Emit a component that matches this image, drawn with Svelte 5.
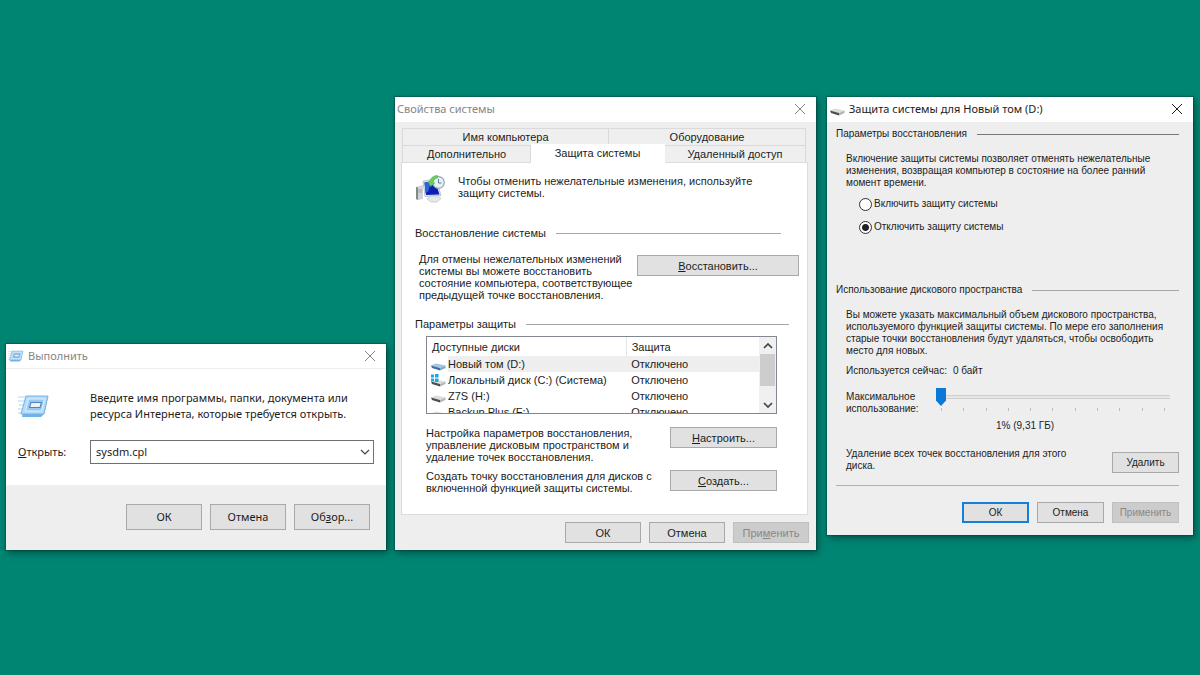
<script>
  const disks = [
    { name: 'Новый том (D:)', state: 'Отключено', kind: 'blue', selected: true },
    { name: 'Локальный диск (C:) (Система)', state: 'Отключено', kind: 'system' },
    { name: 'Z7S (H:)', state: 'Отключено', kind: 'gray' },
    { name: 'Backup Plus  (F:)', state: 'Отключено', kind: 'gray' },
  ];
  let command = $state('sysdm.cpl');
  let protection = $state('off');
  let usage = $state(0);
  const ticks = Array.from({ length: 11 }, (_, i) => i);
</script>

{#snippet closeIcon()}
  <svg class="cross" viewBox="0 0 12 12" aria-hidden="true"><path d="M1 1 11 11M11 1 1 11" fill="none" stroke="currentColor" /></svg>
{/snippet}

{#snippet runIcon()}
  <svg viewBox="0 0 32 24" aria-hidden="true">
    <path d="M0 3h10M0 7h8M1 11h6M0 15h6M0 19h4" stroke="#9fcdf2" stroke-width="1" opacity=".8" />
    <path d="M8 2h22l-4 18-3 3H4z" fill="#6fb2e6" />
    <path d="M8 2h22l-4 18H3z" fill="#b5dbf8" stroke="#74b2e4" />
    <path d="M10.500 5h16l-3 12H7.500z" fill="#93c9f3" stroke="#e0f1ff" />
    <path d="M13 8.500h10.500l-1.500 5H11.500z" fill="#eef3fa" stroke="#5580bd" stroke-width="1.100" />
  </svg>
{/snippet}

{#snippet driveIcon(kind)}
  <svg class="drive" viewBox="0 0 15 13" aria-hidden="true">
    <path d="M0 7.500 5 5.500l9.500 2-5.500 2.500z" fill={kind === 'blue' ? '#a4c6e3' : '#dcdddd'} />
    <path d="M0 7.500 9 10v2.500L1 10z" fill={kind === 'blue' ? '#3f6f9e' : '#4c4e50'} />
    <path d="M9 10 14.500 7.500V10L9 12.500z" fill={kind === 'blue' ? '#7ba8cf' : '#b4b6b7'} />
    {#if kind === 'system'}
      <path d="M0 .5h3v3H0zM4 0h3.500v3.500H4zM0 4.500h3v3H0zM4 4.500h3.500V8H4z" fill="#16a9ea" />
    {/if}
  </svg>
{/snippet}

<main class="desktop">
  <section class="window run" aria-labelledby="run-title">
    <header class="titlebar">
      <span class="mini">{@render runIcon()}</span>
      <h1 id="run-title">Выполнить</h1>
      <button class="close" aria-label="Закрыть">{@render closeIcon()}</button>
    </header>
    <div class="run-body">
      <span class="big">{@render runIcon()}</span>
      <p>Введите имя программы, папки, документа или<br />ресурса Интернета, которые требуется открыть.</p>
      <label for="command"><u>О</u>ткрыть:</label>
      <div class="combo">
        <input id="command" type="text" bind:value={command} />
        <button aria-label="Показать список">
          <svg viewBox="0 0 10 6" aria-hidden="true"><path d="M1 1l4 4 4-4" fill="none" stroke="#444" stroke-width="1.200" /></svg>
        </button>
      </div>
    </div>
    <footer>
      <button class="btn">ОК</button>
      <button class="btn">Отмена</button>
      <button class="btn">Об<u>з</u>ор...</button>
    </footer>
  </section>

  <section class="window system" aria-labelledby="system-title">
    <header class="titlebar">
      <h1 id="system-title">Свойства системы</h1>
      <button class="close" aria-label="Закрыть">{@render closeIcon()}</button>
    </header>
    <div class="system-body">
      <div class="tabs" role="tablist">
        <div class="tab-row upper">
          <button role="tab" aria-selected="false">Имя компьютера</button>
          <button role="tab" aria-selected="false">Оборудование</button>
        </div>
        <div class="tab-row lower">
          <button role="tab" aria-selected="false">Дополнительно</button>
          <button role="tab" aria-selected="true" class="active">Защита системы</button>
          <button role="tab" aria-selected="false">Удаленный доступ</button>
        </div>
      </div>
      <div class="panel" role="tabpanel">
        <div class="intro">
          <svg viewBox="0 0 30 28" aria-hidden="true">
            <path d="M1 12l7-2v14l-5 1-2-1z" fill="#cfd2d6" />
            <path d="M1 12l2 .5V25l-2-1z" fill="#84888d" />
            <path d="M3 15h4M3 17h4" stroke="#8e9399" stroke-width=".7" />
            <path d="M8 6 21 4l5 16.500-16 1z" fill="#e4e7ec" stroke="#a9b0ba" stroke-width=".7" />
            <path d="M9.500 7.500 20 6l4.500 13.500-13.500.5z" fill="#0a1fb4" />
            <path d="M9.500 7.500 16 6.500 13.500 16l-3 2z" fill="#2d62e0" />
            <path d="M12 24l4-3h6l4 2.500-4 3.500h-6z" fill="#e6e8ea" stroke="#b4b8bd" stroke-width=".6" />
            <circle cx="23.500" cy="7.500" r="5.800" fill="#e6f1f5" stroke="#93a8b2" stroke-width="1.200" />
            <path d="M23.500 4v4h3" fill="none" stroke="#53738a" stroke-width=".9" />
            <path d="M22.500.5C18 .5 15.500 3 14.500 7l-1.500-.5 2.500 5 4.500-3.500-2-.5C18.500 5 20 3.500 22.500 3z" fill="#6dcc5a" stroke="#46a84a" stroke-width=".4" />
          </svg>
          <p>Чтобы отменить нежелательные изменения, используйте<br />защиту системы.</p>
        </div>

        <h2 class="rule restore-title">Восстановление системы</h2>
        <div class="action restore">
          <p>Для отмены нежелательных изменений<br />системы вы можете восстановить<br />состояние компьютера, соответствующее<br />предыдущей точке восстановления.</p>
          <button class="btn"><u>В</u>осстановить...</button>
        </div>

        <h2 class="rule params-title">Параметры защиты</h2>
        <div class="settings">
          <div class="list">
            <div class="list-view">
              <table>
                <thead><tr><th>Доступные диски</th><th>Защита</th></tr></thead>
                <tbody>
                  {#each disks as disk}
                    <tr class:selected={disk.selected}>
                      <td><span class="disk">{@render driveIcon(disk.kind)}<span class="name">{disk.name}</span></span></td>
                      <td class="state">{disk.state}</td>
                    </tr>
                  {/each}
                </tbody>
              </table>
            </div>
            <div class="scroll">
              <button aria-label="Вверх"><svg viewBox="0 0 10 6" aria-hidden="true"><path d="M1 5l4-4 4 4" fill="none" stroke="#444" stroke-width="1.700" /></svg></button>
              <div class="thumb"></div>
              <button aria-label="Вниз"><svg viewBox="0 0 10 6" aria-hidden="true"><path d="M1 1l4 4 4-4" fill="none" stroke="#444" stroke-width="1.700" /></svg></button>
            </div>
          </div>
          <div class="action">
            <p>Настройка параметров восстановления,<br />управление дисковым пространством и<br />удаление точек восстановления.</p>
            <button class="btn"><u>Н</u>астроить...</button>
          </div>
          <div class="action">
            <p>Создать точку восстановления для дисков с<br />включенной функцией защиты системы.</p>
            <button class="btn"><u>С</u>оздать...</button>
          </div>
        </div>
      </div>
    </div>
    <footer>
      <button class="btn">ОК</button>
      <button class="btn">Отмена</button>
      <button class="btn" disabled>При<u>м</u>енить</button>
    </footer>
  </section>

  <section class="window volume" aria-labelledby="volume-title">
    <header class="titlebar">
      {@render driveIcon('gray')}
      <h1 id="volume-title">Защита системы для Новый том (D:)</h1>
      <button class="close" aria-label="Закрыть">{@render closeIcon()}</button>
    </header>
    <div class="volume-body">
      <h2 class="rule dark">Параметры восстановления</h2>
      <div class="block">
        <p>Включение защиты системы позволяет отменять нежелательные<br />изменения, возвращая компьютер в состояние на более ранний<br />момент времени.</p>
        <div class="radios">
          <label><input type="radio" name="protection" value="on" bind:group={protection} />Включить защиту системы</label>
          <label><input type="radio" name="protection" value="off" bind:group={protection} />Отключить защиту системы</label>
        </div>
      </div>
      <h2 class="rule">Использование дискового пространства</h2>
      <div class="block">
        <p>Вы можете указать максимальный объем дискового пространства,<br />используемого функцией защиты системы. По мере его заполнения<br />старые точки восстановления будут удаляться, чтобы освободить<br />место для новых.</p>
        <p class="used"><span>Используется сейчас:</span><span>0 байт</span></p>
        <div class="usage">
          <label for="usage">Максимальное<br />использование:</label>
          <div class="slider">
            <input id="usage" type="range" min="0" max="100" bind:value={usage} />
            <div class="ticks">{#each ticks as tick (tick)}<i></i>{/each}</div>
            <output for="usage">1% (9,31 ГБ)</output>
          </div>
        </div>
        <div class="action delete">
          <p>Удаление всех точек восстановления для этого<br />диска.</p>
          <button class="btn">Удалить</button>
        </div>
      </div>
      <footer>
        <button class="btn default">ОК</button>
        <button class="btn">Отмена</button>
        <button class="btn" disabled>Применить</button>
      </footer>
    </div>
  </section>
</main>

<style>
  :global(body) {
    margin: 0;
    background: #008573;
  }

  .desktop {
    display: grid;
    grid-template-columns: 380fr 9px 421fr 11px 366fr;
    align-items: start;
    align-content: start;
    min-height: 100vh;
    padding: 97px 7px 0 6px;
    box-sizing: border-box;
    color: #1c1c1c;
  }

  .desktop *,
  .desktop *::after {
    box-sizing: border-box;
  }

  .window {
    background: #eee;
    box-shadow: 0 0 1px 1px rgb(0 50 45 / 35%), 2px 3px 7px rgb(0 40 35 / 55%);
  }

  .run {
    grid-column: 1;
    align-self: end;
    font: 11px/16px "Noto Sans", "Open Sans", sans-serif;
  }

  .system {
    grid-column: 3;
    font: 11px/12px "Liberation Sans", Arial, sans-serif;
  }

  .volume {
    grid-column: 5;
    font: 10px/12px "Liberation Sans", Arial, sans-serif;
  }

  p,
  h1,
  h2 {
    margin: 0;
    font: inherit;
    white-space: nowrap;
  }

  button {
    padding: 0;
    border: 0;
    background: none;
    color: inherit;
    font: inherit;
  }

  u {
    text-underline-offset: 1px;
  }

  svg {
    display: block;
    flex: none;
  }

  .titlebar {
    display: flex;
    align-items: center;
    height: 25px;
    padding-bottom: 1px;
    background: #fff;
    color: #858585;
    font: 11px/16px "Noto Sans", "Open Sans", sans-serif;
  }

  .close {
    margin-left: auto;
    padding: 0 10px;
  }

  .cross {
    width: 12px;
    height: 12px;
  }

  .btn {
    height: 21px;
    border: 1px solid #a9a9a9;
    background: #e1e1e1;
    white-space: nowrap;
  }

  .btn:disabled {
    border-color: #bfbfbf;
    background: #ccc;
    color: #8c8686;
  }

  .btn.default {
    border: 2px solid #1580d8;
  }

  footer {
    display: flex;
    justify-content: flex-end;
    gap: 8px;
  }

  footer .btn {
    width: 76px;
  }

  .rule {
    display: flex;
    align-items: center;
    gap: 10px;
  }

  .rule::after {
    content: "";
    flex: 1;
    height: 1px;
    background: #a6a6a6;
  }

  .rule.dark::after {
    background: #777;
  }

  .action {
    display: flex;
    justify-content: space-between;
    align-items: flex-start;
  }

  /* Run dialog */
  .run .titlebar {
    padding-bottom: 0;
    border-bottom: 1px solid #eee;
  }

  .mini svg {
    width: 16px;
    height: 12px;
    margin: 0 4px 0 2px;
  }

  .run-body {
    display: grid;
    grid-template-columns: 72px 1fr;
    align-items: center;
    row-gap: 18px;
    padding: 21px 12px;
    background: #fff;
  }

  .run-body label {
    white-space: nowrap;
  }

  .big svg {
    width: 32px;
    height: 24px;
  }

  .combo {
    display: flex;
    height: 24px;
    border: 1px solid #707070;
    background: #fff;
  }

  .combo input {
    flex: 1;
    min-width: 0;
    padding: 0 5px;
    border: 0;
    outline: 0;
    background: none;
    color: inherit;
    font: inherit;
  }

  .combo svg {
    width: 10px;
    height: 6px;
    margin-right: 3px;
  }

  .run footer {
    padding: 19px 16px 20px;
  }

  .run .btn {
    height: 26px;
  }

  /* System properties */
  .system .titlebar {
    padding-left: 2px;
  }

  .system-body {
    padding: 6px 8px 0 6px;
  }

  .tabs {
    padding: 0 2px 0 1px;
  }

  .tab-row {
    display: grid;
  }

  .upper {
    grid-template-columns: 207fr 197fr;
  }

  .lower {
    grid-template-columns: 129fr 134fr 141fr;
  }

  .tab-row button {
    height: 17px;
    border: 1px solid #dadada;
    border-bottom-width: 0;
    background: #efefef;
  }

  .tab-row button + button {
    border-left: 0;
  }

  .tab-row button.active {
    height: 19px;
    margin: -1px 0;
    padding-bottom: 2px;
    border-color: #fff;
    background: #fff;
  }

  .panel {
    padding: 12px 8px 20px 13px;
    border: 1px solid #dcdcdc;
    background: #fff;
  }

  .intro {
    display: flex;
    gap: 13px;
  }

  .intro svg {
    width: 30px;
    height: 28px;
  }

  .restore-title {
    margin: 24px 18px 0 0;
  }

  .restore {
    padding: 14px 0 0 4px;
  }

  .restore .btn {
    width: 162px;
    margin-top: 2px;
  }

  .params-title {
    margin: 17px 10px 0 0;
  }

  .settings {
    padding: 6px 22px 0 11px;
  }

  .list {
    display: flex;
    height: 78px;
    margin-bottom: 13px;
    border: 1px solid #828790;
  }

  .list-view {
    flex: 1;
    overflow: hidden;
  }

  table {
    width: 100%;
    border-collapse: collapse;
    table-layout: fixed;
  }

  th,
  td {
    height: 16px;
    padding: 0 0 0 5px;
    font-weight: 400;
    text-align: left;
    white-space: nowrap;
  }

  th {
    height: 19px;
  }

  th:first-child {
    width: 60%;
    border-right: 1px solid #e5e5e5;
  }

  td:first-child {
    padding-left: 4px;
  }

  .disk {
    display: flex;
    align-items: center;
    gap: 2px;
  }

  .drive {
    width: 15px;
    height: 13px;
  }

  .name {
    flex: 1;
    line-height: 16px;
  }

  .selected .name,
  .selected .state {
    background: #eee;
  }

  .scroll {
    display: flex;
    flex-direction: column;
    width: 17px;
    background: #f0f0f0;
  }

  .scroll button {
    display: grid;
    place-items: center;
    height: 17px;
  }

  .scroll svg {
    width: 10px;
    height: 6px;
  }

  .thumb {
    height: 32px;
    margin: 0 1px auto;
    background: #cdcdcd;
  }

  .settings .action + .action {
    margin-top: 7px;
  }

  .settings .btn {
    width: 107px;
  }

  .system footer {
    padding: 7px;
  }

  /* Volume protection */
  .volume .titlebar {
    padding-left: 3px;
    color: #1c1c1c;
  }

  .volume .titlebar h1 {
    margin-left: 4px;
  }

  .volume-body {
    padding: 6px 14px 12px 9px;
  }

  .block {
    padding: 13px 0 0 10px;
  }

  .radios {
    display: grid;
    justify-items: start;
    gap: 9px;
    padding: 8px 0 50px 13px;
  }

  .radios label {
    display: flex;
    align-items: center;
    gap: 2px;
    height: 14px;
    white-space: nowrap;
  }

  input[type="radio"] {
    appearance: none;
    width: 13px;
    height: 13px;
    margin: 0;
    border: 1px solid #333;
    border-radius: 50%;
    background: #fff;
  }

  input[type="radio"]:checked {
    background: radial-gradient(circle, #222 3px, #fff 4px);
  }

  .used {
    display: flex;
    gap: 6px;
    margin-top: 8px;
  }

  .usage {
    display: grid;
    grid-template-columns: 90px 1fr;
    margin-top: 11px;
  }

  .usage label {
    padding-top: 3px;
  }

  .slider {
    padding-right: 9px;
  }

  input[type="range"] {
    display: block;
    appearance: none;
    width: 100%;
    height: 18px;
    margin: 0;
    background: linear-gradient(#cfcfcf, #cfcfcf 1px, #e6e6e6 1px, #e6e6e6 3px, #cfcfcf 3px) center / 100% 4px no-repeat;
  }

  input[type="range"]::-webkit-slider-thumb {
    appearance: none;
    width: 10px;
    height: 18px;
    background: #0a78d6;
    clip-path: polygon(0 0, 100% 0, 100% 70%, 50% 100%, 0 70%);
  }

  .ticks {
    display: flex;
    justify-content: space-between;
    padding: 2px 5px 0;
  }

  .ticks i {
    width: 1px;
    height: 3px;
    background: #bdbdbd;
  }

  .slider output {
    display: block;
    padding: 9px 0 0 60px;
  }

  .delete {
    padding-top: 16px;
  }

  .delete .btn {
    margin-top: 4px;
  }

  .volume .btn {
    width: 67px;
  }

  .volume footer {
    margin-top: 12px;
    padding-top: 16px;
    border-top: 1px solid #b0b0b0;
  }
</style>
